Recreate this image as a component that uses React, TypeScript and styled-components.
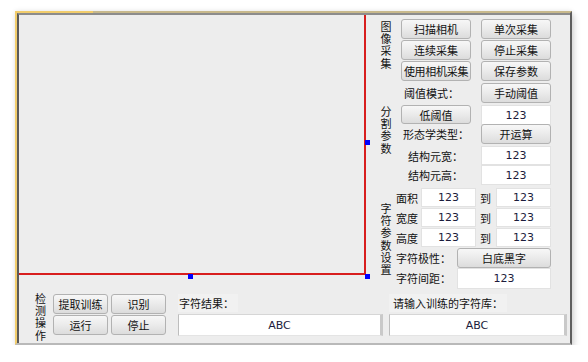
import React from "react";
import styled, { createGlobalStyle } from "styled-components";

const GlobalStyle = createGlobalStyle`
  html, body {
    margin: 0;
    padding: 0;
    background: #ffffff;
  }
  body {
    font-family: "Noto Sans CJK SC", "Liberation Sans", sans-serif;
    font-size: 11px;
    color: #111;
  }
  * {
    box-sizing: border-box;
  }
`;

const rangeRows = [
  { name: "面积", from: "123", to: "123" },
  { name: "宽度", from: "123", to: "123" },
  { name: "高度", from: "123", to: "123" },
];

const App = () => {
  return (
    <>
      <GlobalStyle />
      <Frame>
        <Inner>
          <TopRow>
            <Canvas>
              <Handle style={{ left: 346, top: 125 }} />
              <Handle style={{ left: 169, top: 259 }} />
              <Handle style={{ left: 346, top: 259 }} />
            </Canvas>

            <RightPanel>
              <Section>
                <VLabel $top={1} $gap={9}>
                  图像采集
                </VLabel>
                <TwoColGrid $rows="19px 19px 19px" $rowGap={2}>
                  <Button>扫描相机</Button>
                  <Button>单次采集</Button>
                  <Button>连续采集</Button>
                  <Button>停止采集</Button>
                  <Button $tight>使用相机采集</Button>
                  <Button>保存参数</Button>
                </TwoColGrid>
              </Section>

              <Section $mt={3}>
                <VLabel $top={22} $gap={9}>
                  分割参数
                </VLabel>
                <TwoColGrid $rows="21px 20px 21px 20px 20px" $rowGap={0}>
                  <Label $pl={3}>阈值模式：</Label>
                  <Button>手动阈值</Button>
                  <Button $h={19} $mt={1}>
                    低阈值
                  </Button>
                  <Input $mt={1}>123</Input>
                  <Label $pl={2}>形态学类型：</Label>
                  <Button $mt={0}>开运算</Button>
                  <Label $pl={7} $mt={1}>
                    结构元宽：
                  </Label>
                  <Input $mt={1} $h={19}>
                    123
                  </Input>
                  <Label $pl={7}>结构元高：</Label>
                  <Input>123</Input>
                </TwoColGrid>
              </Section>

              <Section $mt={3}>
                <VLabel $top={14} $gap={4}>
                  字符参数设置
                </VLabel>
                <CharGrid>
                  {rangeRows.map((row) => (
                    <React.Fragment key={row.name}>
                      <Label $pl={0}>{row.name}</Label>
                      <Input $h={19}>{row.from}</Input>
                      <Label $pl={4}>到</Label>
                      <Input $h={19}>{row.to}</Input>
                    </React.Fragment>
                  ))}
                  <WideRow>
                    <Label $pl={0} $w={61}>
                      字符极性：
                    </Label>
                    <Button $flex>白底黑字</Button>
                  </WideRow>
                  <WideRow>
                    <Label $pl={0} $w={61}>
                      字符间距：
                    </Label>
                    <Input $flex $h={21}>
                      123
                    </Input>
                  </WideRow>
                </CharGrid>
              </Section>
            </RightPanel>
          </TopRow>

          <BottomRow>
            <VLabel $top={0} $gap={7} $w={11}>
              检测操作
            </VLabel>
            <OpsGrid>
              <Button>提取训练</Button>
              <Button>识别</Button>
              <Button $h={20}>运行</Button>
              <Button $h={20}>停止</Button>
            </OpsGrid>
            <ResultGroup $ml={12} $w={205}>
              <FieldTitle>字符结果：</FieldTitle>
              <BigInput>ABC</BigInput>
            </ResultGroup>
            <ResultGroup $ml={6} $w={178}>
              <FieldTitle $pl={4}>请输入训练的字符库：</FieldTitle>
              <BigInput>ABC</BigInput>
            </ResultGroup>
          </BottomRow>
        </Inner>
      </Frame>
    </>
  );
};

export default App;

const Frame = styled.div`
  position: relative;
  margin: 11px 0 0 15px;
  width: 557px;
  height: 334px;
  background: #ededed;
  border-top: 2px solid #c8b98c;
  border-left: 2px solid #f2cd6c;
  border-right: 2px solid #5e5e5e;
  border-bottom: 2px solid #b9b9b9;
  box-shadow: 0 0 5px rgba(0, 0, 0, 0.1), 3px 4px 6px rgba(0, 0, 0, 0.12);

  &::before {
    content: "";
    position: absolute;
    left: -2px;
    top: -2px;
    width: 78px;
    height: 2px;
    background: #f2cd6c;
  }
`;

const Inner = styled.div`
  display: flex;
  flex-direction: column;
  width: 100%;
  height: 100%;
  border-left: 2px solid #5a5a5a;
  border-top: 2px solid #8c8c8c;
`;

const TopRow = styled.div`
  display: flex;
  flex-direction: row;
  height: 277px;
  flex: none;
`;

const Canvas = styled.div`
  position: relative;
  flex: none;
  width: 347px;
  height: 260px;
  border-right: 2px solid #d81e1e;
  border-bottom: 2px solid #d81e1e;
`;

const Handle = styled.div`
  position: absolute;
  width: 5px;
  height: 5px;
  background: #0000ff;
`;

const RightPanel = styled.div`
  display: flex;
  flex-direction: column;
  padding: 4px 0 0 14px;
`;

const Section = styled.div<{ $mt?: number }>`
  display: flex;
  flex-direction: row;
  align-items: flex-start;
  margin-top: ${(p) => p.$mt ?? 0}px;
`;

const VLabel = styled.div<{ $top: number; $gap: number; $w?: number }>`
  flex: none;
  width: ${(p) => p.$w ?? 12}px;
  margin-top: ${(p) => p.$top}px;
  margin-right: ${(p) => p.$gap}px;
  font-size: 11px;
  line-height: 12.2px;
  text-align: center;
  word-break: break-all;
  color: #111;
`;

const TwoColGrid = styled.div<{ $rows: string; $rowGap: number }>`
  display: grid;
  grid-template-columns: 70px 70px;
  grid-template-rows: ${(p) => p.$rows};
  column-gap: 10px;
  row-gap: ${(p) => p.$rowGap}px;
  align-items: start;
`;

const CharGrid = styled.div`
  display: grid;
  grid-template-columns: 25px 55px 20px 55px;
  grid-template-rows: 19px 19px 19px 19px 21px;
  row-gap: 1px;
  align-items: start;
`;

const WideRow = styled.div`
  grid-column: 1 / -1;
  display: flex;
  flex-direction: row;
  align-items: stretch;
  height: 100%;
`;

const Button = styled.div<{ $h?: number; $mt?: number; $flex?: boolean; $tight?: boolean }>`
  display: flex;
  align-items: center;
  justify-content: center;
  height: ${(p) => p.$h ?? 20}px;
  margin-top: ${(p) => p.$mt ?? 0}px;
  ${(p) => (p.$flex ? "flex: 1;" : "")}
  background: linear-gradient(#f7f7f7, #ececec 45%, #dcdcdc);
  border: 1px solid #b2b2b2;
  border-radius: 3px;
  font-size: 11px;
  letter-spacing: ${(p) => (p.$tight ? "-0.3px" : "0")};
  white-space: nowrap;
  color: #111;
`;

const Input = styled.div<{ $h?: number; $mt?: number; $flex?: boolean }>`
  display: flex;
  align-items: center;
  justify-content: center;
  height: ${(p) => p.$h ?? 20}px;
  margin-top: ${(p) => p.$mt ?? 0}px;
  ${(p) => (p.$flex ? "flex: 1;" : "")}
  background: #ffffff;
  border: 1px solid #e2e2e2;
  font-family: "DejaVu Sans", "Liberation Sans", sans-serif;
  font-size: 11px;
  color: #1c1c3c;
`;

const Label = styled.div<{ $pl: number; $mt?: number; $w?: number }>`
  display: flex;
  align-items: center;
  height: 19px;
  ${(p) => (p.$w ? `width: ${p.$w}px; flex: none;` : "")}
  margin-top: ${(p) => p.$mt ?? 0}px;
  padding-left: ${(p) => p.$pl}px;
  font-size: 11px;
  white-space: nowrap;
  color: #111;
`;

const BottomRow = styled.div`
  display: flex;
  flex-direction: row;
  align-items: flex-start;
  padding-left: 16px;
`;

const OpsGrid = styled.div`
  display: grid;
  grid-template-columns: 55px 55px;
  grid-template-rows: 19px 20px;
  column-gap: 3px;
  row-gap: 2px;
  margin-top: 2px;
`;

const ResultGroup = styled.div<{ $ml: number; $w: number }>`
  display: flex;
  flex-direction: column;
  align-items: flex-start;
  width: ${(p) => p.$w}px;
  margin-left: ${(p) => p.$ml}px;
  margin-top: 2px;
  gap: 2px;
`;

const FieldTitle = styled.div<{ $pl?: number }>`
  display: flex;
  align-items: center;
  height: 18px;
  padding: 0 4px 0 ${(p) => p.$pl ?? 1}px;
  background: #f1f1f1;
  font-size: 11px;
  color: #111;
`;

const BigInput = styled.div`
  display: flex;
  align-items: center;
  justify-content: center;
  align-self: stretch;
  height: 22px;
  background: #ffffff;
  border-left: 1px solid #bdbdbd;
  border-top: 1px solid #d6d6d6;
  border-bottom: 1px solid #e4e4e4;
  border-right: 3px solid #c9c9c9;
  font-family: "DejaVu Sans", "Liberation Sans", sans-serif;
  font-size: 11px;
  color: #1c1c3c;
`;
